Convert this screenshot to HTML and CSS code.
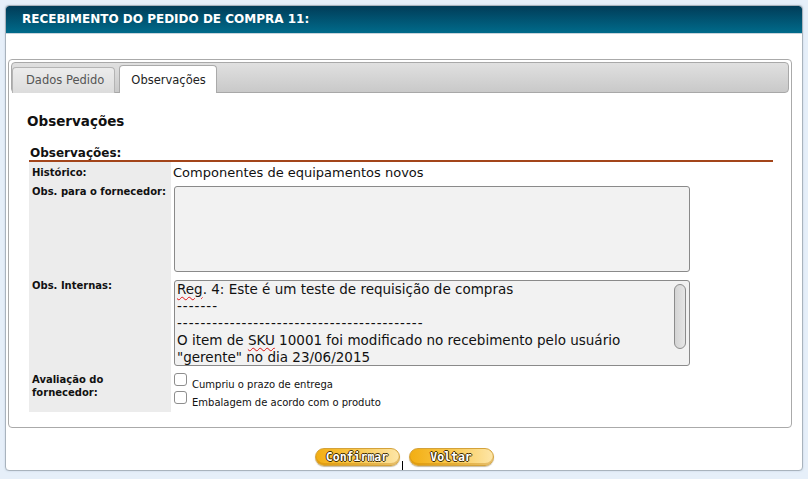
FILE: index.html
```html
<!DOCTYPE html>
<html lang="pt-BR">
<head>
<meta charset="utf-8">
<title>Recebimento do Pedido de Compra 11</title>
<link rel="stylesheet" href="styles.css">
</head>
<body>
<div class="window">
  <div class="titlebar">RECEBIMENTO DO PEDIDO DE COMPRA 11:</div>
  <div class="tabs-panel">
    <div class="tabbar">
      <div class="tab">Dados Pedido</div>
      <div class="tab active">Observações</div>
    </div>
    <div class="tab-content">
      <h2 class="page-title">Observações</h2>
      <div class="section-title">Observações:</div>
      <div class="form">
        <div class="lbl lbl-hist">Histórico:</div>
        <div class="val val-hist">Componentes de equipamentos novos</div>

        <div class="lbl lbl-forn">Obs. para o fornecedor:</div>
        <div class="val val-forn"><div class="textbox tb-empty"></div></div>

        <div class="lbl lbl-int">Obs. Internas:</div>
        <div class="val val-int">
          <div class="textbox tb-int">
            <div class="tb-text"><span class="spell">Reg</span>. 4: Este é um teste de requisição de compras<br><span class="dash">-------</span><br><span class="dash">------------------------------------------</span><br>O item de <span class="spell">SKU</span> 10001 foi modificado no recebimento pelo usuário<br>"gerente" no dia 23/06/2015</div>
            <div class="scrollbar"><div class="thumb"></div></div>
          </div>
        </div>

        <div class="lbl lbl-aval">Avaliação do<br>fornecedor:</div>
        <div class="val val-aval">
          <label class="check"><span class="box"></span>Cumpriu o prazo de entrega</label>
          <label class="check"><span class="box"></span>Embalagem de acordo com o produto</label>
        </div>
      </div>
    </div>
  </div>
  <div class="actions">
    <button class="btn">Confirmar</button>
    <button class="btn">Voltar</button>
    <span class="cursor"></span>
  </div>
</div>
</body>
</html>
```
FILE: styles.css
```css
html, body {
  margin: 0;
  padding: 0;
}
body {
  background: #e6eff9;
  font-family: "DejaVu Sans", Verdana, sans-serif;
  color: #111;
  padding: 5px;
  width: 808px;
  height: 479px;
  box-sizing: border-box;
}
.window {
  width: 798px;
  height: 466px;
  box-sizing: border-box;
  background: #fff;
  border: 1px solid #a9b3bd;
  border-radius: 4px;
  box-shadow: 0 0 2px rgba(120, 150, 180, 0.35);
  overflow: hidden;
  position: relative;
}
.titlebar {
  height: 27px;
  line-height: 27px;
  padding-left: 16px;
  background: linear-gradient(#013c58, #006b8b);
  color: #fff;
  font-weight: bold;
  font-size: 12px;
  border-bottom: 1px solid #c8d4dc;
  border-radius: 3px 3px 0 0;
}
.tabs-panel {
  margin: 25px 10px 0 2px;
  height: 369px;
  box-sizing: border-box;
  border: 1px solid #aaa;
  border-radius: 4px;
  padding: 2px;
}
.tabbar {
  height: 31px;
  box-sizing: border-box;
  border: 1px solid #a8a8a8;
  border-radius: 4px;
  background: linear-gradient(#e0e0e0, #c9c9c9);
  display: flex;
  align-items: flex-end;
  gap: 4px;
  padding-left: 0;
}
.tab {
  height: 26px;
  box-sizing: border-box;
  padding: 0 10px 0 13px;
  line-height: 25px;
  font-size: 11.5px;
  color: #555;
  background: linear-gradient(#ececec, #dcdcdc);
  border: 1px solid #b4b4b4;
  border-bottom: none;
  border-radius: 4px 4px 0 0;
  margin-bottom: -1px;
}
.tab.active {
  height: 28px;
  line-height: 29px;
  padding: 0 10px 0 11px;
  color: #222;
  background: #fff;
  border-color: #aaa;
  margin-bottom: -1px;
}
.tab-content {
  padding: 0 16px 0 18px;
}
.page-title {
  margin: 19px 0 0 -2px;
  font-size: 13.5px;
  font-weight: bold;
  color: #111;
  line-height: 18px;
}
.section-title {
  margin: 16px 0 0 1px;
  font-size: 12px;
  font-weight: bold;
  line-height: 14px;
  color: #111;
}
.form {
  margin-top: 0;
  border-top: 2px solid #a3451a;
  display: grid;
  grid-template-columns: 142px 1fr;
}
.lbl {
  background: #ececec;
  font-size: 10px;
  font-weight: bold;
  color: #111;
  padding-left: 3px;
  line-height: 13px;
}
.val {
  padding-left: 3px;
}
.lbl-hist { padding-top: 4px; height: 17px; }
.val-hist {
  font-size: 13px;
  line-height: 21px;
  padding-left: 2px;
  padding-top: 0;
  height: 21px;
  color: #111;
}
.lbl-forn { padding-top: 2px; }
.val-forn { padding-top: 3px; padding-bottom: 4px; }
.lbl-int { padding-top: 3px; }
.val-int { padding-top: 4px; padding-bottom: 2px; }
.lbl-aval { padding-top: 5px; height: 39px; }
.val-aval { padding-top: 5px; }

.textbox {
  width: 516px;
  height: 86px;
  box-sizing: border-box;
  background: #f2f2f2;
  border: 1px solid #8a8a8a;
  border-radius: 3px;
}
.tb-empty { height: 86px; }
.tb-int {
  display: flex;
  overflow: hidden;
}
.tb-text {
  flex: 1;
  font-size: 13.5px;
  line-height: 17px;
  padding: 0 0 0 2px;
  color: #111;
  white-space: nowrap;
  overflow: hidden;
}
.dash {
  letter-spacing: 1px;
}
.spell {
  text-decoration: underline wavy #e01010;
  text-decoration-thickness: 1px;
  text-underline-offset: 2px;
}
.scrollbar {
  width: 14px;
  padding: 3px 1px 0 0;
}
.thumb {
  width: 12px;
  height: 65px;
  box-sizing: border-box;
  border: 1px solid #8c8c8c;
  border-radius: 6px;
  background: linear-gradient(90deg, #d4d4d4, #e6e6e6);
}
.check {
  display: flex;
  align-items: flex-start;
  font-size: 10px;
  color: #111;
  height: 18px;
  line-height: 23px;
}
.box {
  width: 13px;
  height: 13px;
  box-sizing: border-box;
  border: 1px solid #8e8e8e;
  border-radius: 3px;
  background: #fff;
  margin: 0 5px 0 0;
}
.actions {
  display: flex;
  justify-content: center;
  gap: 9px;
  margin-top: 20px;
  position: relative;
}
.btn {
  width: 85px;
  height: 18px;
  padding: 0;
  border: 1px solid #d4a23a;
  border-radius: 9px;
  background: linear-gradient(90deg, #f3ae12 0%, #f8c547 45%, #fde6a8 100%);
  box-shadow: inset 0 -2px 0 rgba(190, 120, 0, 0.35), 0 1px 1px rgba(120, 90, 20, 0.4);
  font-family: "DejaVu Sans Mono", "Liberation Mono", monospace;
  font-weight: bold;
  font-size: 11.5px;
  line-height: 16px;
  color: #fff;
  text-shadow: 1px 0 0 #3c2a00, -1px 0 0 #3c2a00, 0 1px 0 #3c2a00, 0 -1px 0 #3c2a00;
}
.cursor {
  position: absolute;
  left: 396px;
  top: 13px;
  width: 1px;
  height: 15px;
  background: #000;
}
```
